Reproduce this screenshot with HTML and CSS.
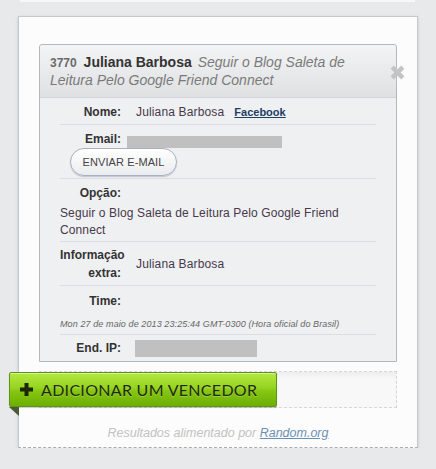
FILE: index.html
```html
<!DOCTYPE html>
<html lang="pt">
<head>
    <meta charset="UTF-8">
    <title>Sorteio - Vencedores</title>
    <link rel="stylesheet" href="styles.css">
</head>
<body>

<div class="top-strip"></div>

<div class="card">
    <div class="entry">
        <div class="entry-head">
            <span class="entry-id">3770</span>
            <span class="entry-name">Juliana Barbosa</span>
            <span class="entry-option">Seguir o Blog Saleta de Leitura Pelo Google Friend Connect</span>
            <span class="close-btn">
                <svg width="17" height="17" viewBox="0 0 16 16">
                    <path d="M1.5 4.5 L4.5 1.5 L8 5 L11.5 1.5 L14.5 4.5 L11 8 L14.5 11.5 L11.5 14.5 L8 11 L4.5 14.5 L1.5 11.5 L5 8 Z" fill="#c3c4c6"/>
                </svg>
            </span>
        </div>

        <div class="row">
            <div class="line">
                <span class="label">Nome:</span>
                <span class="value">Juliana Barbosa</span>
                <a class="fb-link" href="#">Facebook</a>
            </div>
        </div>

        <div class="row row-mail">
            <div class="line">
                <span class="label">Email:</span>
                <span class="hidden-bar email-bar"></span>
            </div>
            <button class="mail-btn">Enviar e-mail</button>
        </div>

        <div class="row row-option">
            <div class="line">
                <span class="label">Opção:</span>
            </div>
            <div class="long-value">Seguir o Blog Saleta de Leitura Pelo Google Friend Connect</div>
        </div>

        <div class="row row-extra">
            <div class="line">
                <span class="label">Informação extra:</span>
                <span class="value">Juliana Barbosa</span>
            </div>
        </div>

        <div class="row row-time">
            <div class="line">
                <span class="label">Time:</span>
            </div>
            <div class="time-value">Mon 27 de maio de 2013 23:25:44 GMT-0300 (Hora oficial do Brasil)</div>
        </div>

        <div class="row last">
            <div class="line">
                <span class="label">End. IP:</span>
                <span class="hidden-bar ip-bar"></span>
            </div>
        </div>
    </div>

    <div class="drop-zone">
        <button class="add-btn">
            <svg class="plus" width="13" height="13" viewBox="0 0 13 13">
                <path d="M4.5 0 H8.5 V4.5 H13 V8.5 H8.5 V13 H4.5 V8.5 H0 V4.5 H4.5 Z" fill="#1b2806"/>
            </svg>
            <span>Adicionar um vencedor</span>
        </button>
    </div>

    <p class="footer">Resultados alimentado por <a href="#">Random.org</a></p>
</div>

</body>
</html>
```

FILE: styles.css
```css
body {
    margin: 0;
    background-color: #e8e9eb;
    font-family: "Liberation Sans", Arial, sans-serif;
    font-size: 12px;
}
.top-strip {
    height: 2px;
    margin: 0 21px 0 20px;
    background-color: #f6f7f8;
}
.card {
    width: 400px;
    box-sizing: border-box;
    margin: 14px 0 0 18px;
    padding: 27px 20px 6px 20px;
    background-color: #fcfcfc;
    border: 1px solid #c5c8d0;
    border-bottom: 1px dashed #a9acb2;
    box-shadow: 0 1px 3px rgba(0, 0, 0, 0.15);
}
.entry {
    border: 1px solid #b4b7be;
    border-radius: 3px 3px 0 0;
    background-color: #eff0f2;
}
.entry-head {
    position: relative;
    padding: 9px 36px 8px 10px;
    font-size: 14px;
    line-height: 17px;
    background: linear-gradient(#f3f4f5, #dfe0e2);
    border-bottom: 1px solid #d4d5d8;
    border-radius: 3px 3px 0 0;
}
.entry-id {
    font-size: 12px;
    font-weight: bold;
    color: #6a6a6a;
    margin-right: 3px;
}
.entry-name {
    font-weight: bold;
    color: #333;
    margin-right: 2px;
}
.entry-option {
    font-style: italic;
    color: #7a7a7a;
}
.close-btn {
    position: absolute;
    right: -10px;
    top: 19px;
    width: 17px;
    height: 17px;
}
.close-btn svg {
    display: block;
}
.row {
    margin: 0 20px;
    padding: 5px 0 3px;
    border-bottom: 1px solid #dcdde0;
}
.row-mail {
    padding-bottom: 2px;
}
.row-option {
    padding-bottom: 2px;
}
.row-extra {
    padding-top: 4px;
}
.row-time {
    padding: 6px 0 2px;
}
.row.last {
    padding: 4px 0 4px;
    border-bottom: none;
}
.line {
    display: flex;
    align-items: center;
}
.label {
    width: 61px;
    flex-shrink: 0;
    text-align: right;
    font-weight: bold;
    line-height: 18px;
    color: #333;
}
.value {
    margin-left: 15px;
    letter-spacing: 0.15px;
    color: #47394a;
}
.fb-link {
    margin-left: 10px;
    font-size: 11px;
    font-weight: bold;
    color: #1d3d63;
}
.hidden-bar {
    display: block;
    background-color: #c0c0c0;
}
.email-bar {
    align-self: flex-end;
    margin-left: 6px;
    width: 155px;
    height: 12px;
}
.ip-bar {
    margin-left: 14px;
    width: 122px;
    height: 17px;
}
.mail-btn {
    display: block;
    margin-left: 10px;
    width: 107px;
    height: 28px;
    padding: 0;
    font-family: "Liberation Sans", Arial, sans-serif;
    font-size: 11px;
    letter-spacing: 0.1px;
    text-transform: uppercase;
    color: #444;
    background: linear-gradient(#ffffff, #ebecef);
    border: 1px solid #a9afbf;
    border-radius: 14px;
    box-shadow: 0 1px 1px rgba(120, 130, 160, 0.4);
}
.long-value {
    margin-top: 3px;
    line-height: 17px;
    letter-spacing: 0.12px;
    color: #47394a;
}
.time-value {
    margin-top: 6px;
    font-size: 9px;
    font-style: italic;
    line-height: 16px;
    letter-spacing: 0.1px;
    color: #666;
}
.drop-zone {
    margin-top: 9px;
    height: 35px;
    border: 1px dashed #d6d7d9;
    background-color: #f8f8f8;
    box-shadow: inset 0 7px 6px -4px rgba(0, 0, 0, 0.05);
}
.add-btn {
    position: relative;
    display: flex;
    align-items: center;
    margin-left: -31px;
    width: 268px;
    height: 35px;
    padding: 0 0 0 10px;
    font-family: Lato, "Liberation Sans", sans-serif;
    font-size: 16px;
    letter-spacing: 0.3px;
    white-space: nowrap;
    text-transform: uppercase;
    color: #1d2b07;
    text-shadow: 0 1px 0 rgba(255, 255, 255, 0.25);
    background: linear-gradient(#b5e842 0%, #96d322 45%, #86c612 55%, #6cae04 100%);
    border: 1px solid #5c9614;
    border-radius: 2px;
    box-shadow: inset 0 1px 0 rgba(255, 255, 255, 0.45), 0 1px 1px rgba(0, 0, 0, 0.2);
}
.add-btn::after {
    content: "";
    position: absolute;
    left: -1px;
    bottom: -10px;
    border-top: 9px solid #4b5a36;
    border-left: 10px solid transparent;
}
.plus {
    flex-shrink: 0;
    margin-right: 8px;
}
.footer {
    margin: 17px 0 0;
    text-align: center;
    font-size: 12.5px;
    font-style: italic;
    line-height: 16px;
    color: #c2c2c2;
}
.footer a {
    color: #6c90b3;
}
```
